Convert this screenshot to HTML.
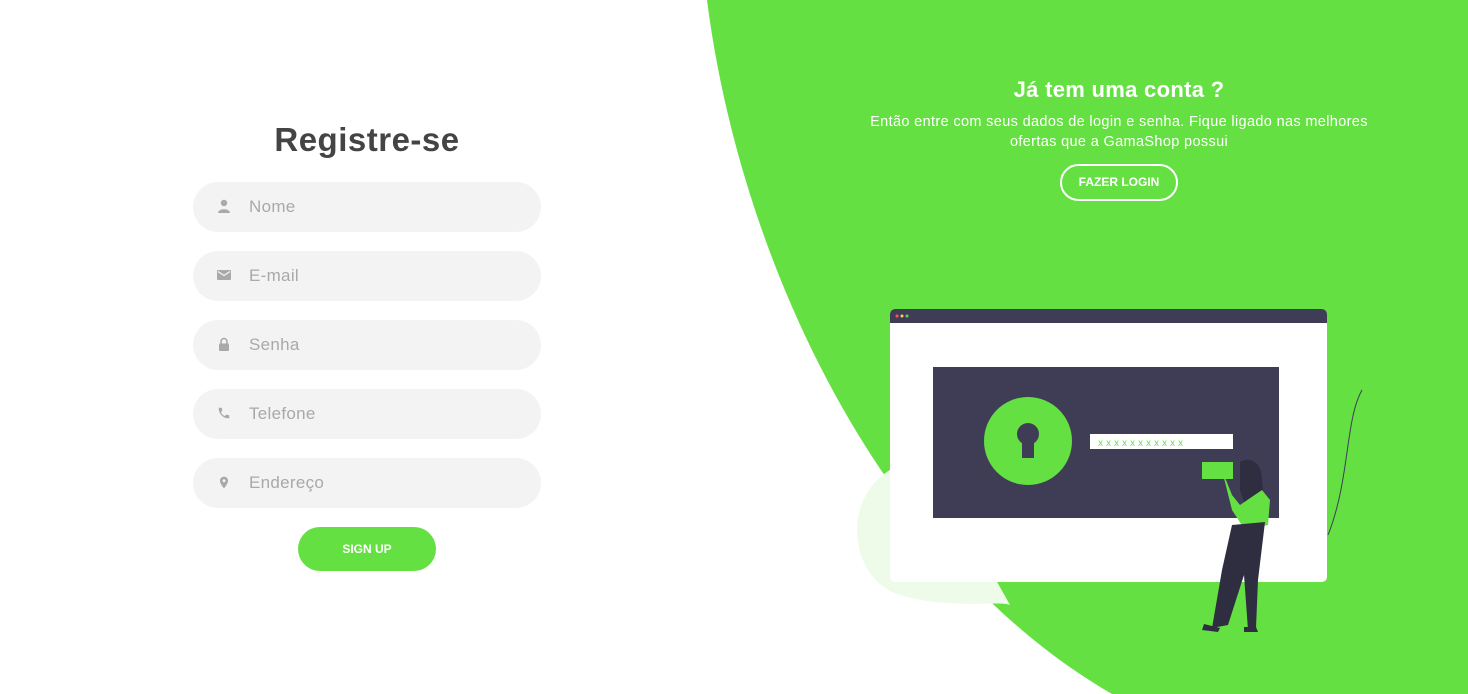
<!DOCTYPE html>
<html><head><meta charset="utf-8"><style>
*{margin:0;padding:0;box-sizing:border-box}
body{width:1468px;height:694px;overflow:hidden;background:#fff;font-family:"Liberation Sans",sans-serif;position:relative}
.bg{position:absolute;left:0;top:0}
h1{position:absolute;left:0;width:734px;text-align:center;top:121px;font-size:33px;color:#444;font-weight:bold;letter-spacing:.5px}
.in{position:absolute;left:193px;width:348px;height:50px;border-radius:25px;background:#f3f3f3;color:#a9a9a9;font-size:17px;line-height:50px;padding-left:56px;letter-spacing:.3px}
.in svg{position:absolute;left:24px;top:17px}
.btn{position:absolute;left:298px;top:527px;width:138px;height:44px;border-radius:22px;background:#65e043;color:#fff;font-weight:bold;font-size:12px;text-align:center;line-height:44px}
.r{position:absolute;left:800px;width:638px;text-align:center;color:#fff}
.login{position:absolute;left:1060px;top:164px;width:118px;height:37px;border:2px solid #fff;border-radius:19px;color:#fff;font-size:12px;font-weight:bold;text-align:center;line-height:33px}
</style></head><body>
<svg class="bg" width="1468" height="694">
<path d="M707,0 C740,260 880,560 1112,694 L1468,694 L1468,0 Z" fill="#65e043"/>
<path d="M890,470 C840,500 850,580 900,595 C950,610 1000,600 1010,605 L940,480 Z" fill="#eefbe9"/>
<path d="M1362,390 C1345,420 1350,480 1328,535" stroke="#3f3d56" stroke-width="1" fill="none"/>
<rect x="890" y="309" width="437" height="273" rx="5" fill="#fff"/>
<path d="M890,314 a5,5 0 0 1 5,-5 h427 a5,5 0 0 1 5,5 v9 h-437z" fill="#3f3d56"/>
<circle cx="897" cy="316" r="1.5" fill="#f55"/><circle cx="902" cy="316" r="1.5" fill="#fc5"/><circle cx="907" cy="316" r="1.5" fill="#6c6"/>
<rect x="933" y="367" width="346" height="151" fill="#3f3d56"/>
<circle cx="1028" cy="441" r="44" fill="#65e043"/>
<circle cx="1028" cy="434" r="11" fill="#3f3d56"/><rect x="1022" y="436" width="12" height="22" fill="#3f3d56"/>
<rect x="1090" y="434" width="143" height="15" fill="#fff"/>
<text x="1098" y="446" fill="#65e043" font-size="10" letter-spacing="3" font-family="Liberation Sans">xxxxxxxxxxx</text>
<rect x="1202" y="462" width="31" height="17" fill="#65e043"/>
<path d="M1240,462 C1250,456 1262,462 1262,480 L1264,500 L1250,520 L1240,490 Z" fill="#2f2e41"/>
<path d="M1222,470 L1232,495 L1240,505 L1262,490 L1270,500 L1268,525 L1245,530 L1232,510 Z" fill="#65e043"/>
<path d="M1232,525 L1265,522 L1258,580 L1256,628 L1248,630 L1244,575 L1228,625 L1212,628 L1222,570 Z" fill="#2f2e41"/>
<path d="M1204,624 L1220,628 L1218,632 L1202,630Z M1244,627 L1256,627 L1258,632 L1244,632Z" fill="#2f2e41"/>
</svg>
<h1>Registre-se</h1>
<div class="in" style="top:182px"><svg width="14" height="14" viewBox="0 0 14 14"><circle cx="7" cy="4" r="3.2" fill="#a9a9a9"/><path d="M1,14 C1,9 13,9 13,14Z" fill="#a9a9a9"/></svg>Nome</div>
<div class="in" style="top:251px"><svg width="14" height="14" viewBox="0 0 14 14"><rect x="0" y="2" width="14" height="10" rx="1" fill="#a9a9a9"/><path d="M1,3.5 L7,7.5 L13,3.5" stroke="#f3f3f3" stroke-width="1.3" fill="none"/></svg>E-mail</div>
<div class="in" style="top:320px"><svg width="14" height="14" viewBox="0 0 14 14"><path d="M4,7 V4.5 a3,3 0 0 1 6,0 V7" stroke="#a9a9a9" stroke-width="1.6" fill="none"/><rect x="2" y="6.5" width="10" height="7.5" rx="1" fill="#a9a9a9"/></svg>Senha</div>
<div class="in" style="top:389px"><svg width="14" height="14" viewBox="0 0 24 24"><path d="M6.6 10.8c1.4 2.8 3.8 5.1 6.6 6.6l2.2-2.2c.3-.3.7-.4 1-.2 1.1.4 2.3.6 3.6.6.6 0 1 .4 1 1V20c0 .6-.4 1-1 1C10.6 21 3 13.4 3 4c0-.6.4-1 1-1h3.5c.6 0 1 .4 1 1 0 1.3.2 2.5.6 3.6.1.3 0 .7-.2 1z" fill="#a9a9a9"/></svg>Telefone</div>
<div class="in" style="top:458px"><svg width="14" height="15" viewBox="0 0 24 24"><path d="M12 2C8.1 2 5 5.1 5 9c0 5.2 7 13 7 13s7-7.8 7-13c0-3.9-3.1-7-7-7zm0 9.5a2.5 2.5 0 1 1 0-5 2.5 2.5 0 0 1 0 5z" fill="#a9a9a9"/></svg>Endereço</div>
<div class="btn">SIGN UP</div>
<div class="r" style="top:77px;font-size:22px;font-weight:bold;letter-spacing:.3px">Já tem uma conta ?</div>
<div class="r" style="top:112px;font-size:14.5px;line-height:20px;letter-spacing:.35px">Então entre com seus dados de login e senha. Fique ligado nas melhores<br>ofertas que a GamaShop possui</div>
<div class="login">FAZER LOGIN</div>
</body></html>
